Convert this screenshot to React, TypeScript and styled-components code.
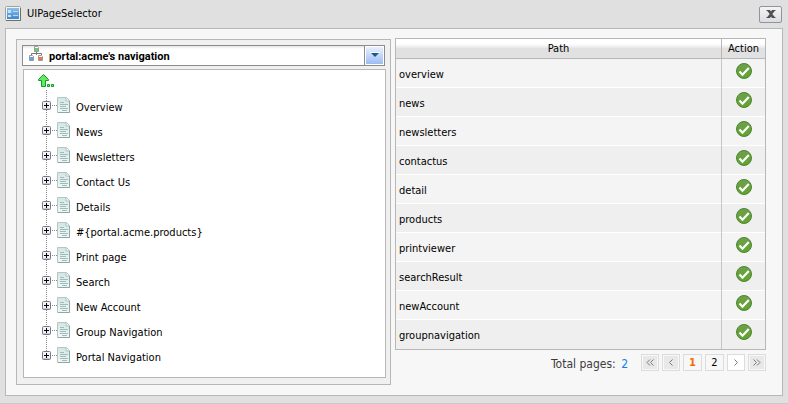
import React, { useState } from 'react';
import styled, { createGlobalStyle, css } from 'styled-components';

const GlobalStyle = createGlobalStyle`
  * { box-sizing: border-box; }
  body {
    margin: 0;
    background: #e0e0e0;
    color: #000;
    font: 11px/16px Tahoma, "DejaVu Sans Condensed", "Noto Sans", sans-serif;
  }
  button, select { font: inherit; color: inherit; }
  button { padding: 0; cursor: pointer; }
  svg { display: block; flex: none; }
`;

const Dialog = styled.section`
  padding: 0 5px 7px;
  border-bottom: 1px solid #cacaca;
`;

const TitleBar = styled.header`
  display: flex;
  align-items: center;
  gap: 6px;
  height: 28px;
`;

const Title = styled.h1`
  flex: 1;
  margin: 0;
  font-size: 11px;
  font-weight: normal;
`;

const CloseButton = styled.button`
  display: grid;
  place-items: center;
  width: 23px;
  height: 17px;
  margin-right: 1px;
  border: 1px solid #92949c;
  border-radius: 2px;
  background: linear-gradient(#f4f4f5, #dcdde1);
`;

const Content = styled.div`
  display: grid;
  grid-template-columns: 375fr 371fr;
  align-items: start;
  gap: 4px;
  padding: 9px 16px 10px 10px;
  border: 1px solid #b7b7b7;
  background: #f7f7f7;
`;

const Navigator = styled.div`
  margin-top: 1px;
  padding: 5px 4px 6px 5px;
  border: 1px solid #b7b7b7;
  background: #f0f0f0;
`;

const Combo = styled.div`
  position: relative;
  height: 21px;
  margin-right: 1px;
`;

const ComboSelect = styled.select`
  appearance: none;
  width: 100%;
  height: 21px;
  padding: 2px 24px 0 26px;
  border: 1px solid #8c8c8c;
  border-radius: 0;
  background: linear-gradient(#e4e4e4, #fff 3px);
  font-family: Tahoma, Roboto, sans-serif;
  font-weight: bold;
`;

const ComboIcon = styled.span`
  position: absolute;
  top: 1px;
  left: 7px;
  pointer-events: none;
`;

const ComboArrow = styled.span`
  position: absolute;
  top: 1px;
  right: 1px;
  display: grid;
  place-items: center;
  width: 19px;
  height: 19px;
  border: 1px solid #fff;
  background: linear-gradient(#eaf0fc, #9dbcf5);
  box-shadow: -1px 0 #8c8c8c;
  pointer-events: none;
`;

const Tree = styled.div`
  margin: 3px 0 0 1px;
  padding: 4px 14px 8px;
  border: 1px solid #b7b7b7;
  background: #fff;
`;

const UpButton = styled.button`
  display: block;
  border: 0;
  background: none;
`;

const Nodes = styled.ul`
  margin: 2px 0 0;
  padding: 4px 0 0;
  list-style: none;
  background: repeating-linear-gradient(#888 0 1px, transparent 1px 2px) 8px 0 / 1px calc(100% - 17px) no-repeat;
`;

const Node = styled.li`
  display: flex;
  align-items: center;
  height: 25px;
  padding-left: 4px;
`;

const Toggle = styled.button`
  border: 0;
  background: none;
  margin-bottom: 2px;
`;

const Connector = styled.span`
  width: 6px;
  height: 1px;
  margin: 0 0 2px;
  background: repeating-linear-gradient(90deg, transparent 0 1px, #888 1px 2px);
`;

const NodeLink = styled.a`
  display: flex;
  align-items: center;
  gap: 6px;
  color: inherit;
  text-decoration: none;
  svg { margin-bottom: 3px; }
  span { margin-top: 3px; }
`;

const Table = styled.table`
  width: 100%;
  border: 1px solid #b7b7b7;
  border-spacing: 0;
  table-layout: fixed;
`;

const ActionCol = styled.col`
  width: 44px;
`;

const HeadCell = styled.th<{ $divided?: boolean }>`
  height: 20px;
  padding: 1px 0 0;
  border-bottom: 1px solid #b7b7b7;
  ${p => p.$divided && css`border-left: 1px solid #b7b7b7;`}
  background: linear-gradient(#fff 25%, #f0f0f0 40%, #e1e1e1 50%, #e1e1e1);
  font-weight: normal;
  text-align: center;
`;

const Row = styled.tr`
  background: #f4f4f4;
  &:nth-child(even) { background: #efefef; }
  &:not(:last-child) > td { box-shadow: inset 0 -1px #fff; }
`;

const PathCell = styled.td`
  height: 29px;
  padding: 2px 3px 0;
`;

const ActionCell = styled.td`
  padding: 0 14px 6px;
  border-left: 1px solid #c6c6c6;
`;

const PickButton = styled.button`
  display: block;
  border: 0;
  background: none;
`;

const Pager = styled.nav`
  display: flex;
  justify-content: flex-end;
  align-items: flex-start;
  gap: 3px;
  margin-top: 4px;
`;

const Total = styled.span`
  margin: 2px 10px 0 0;
  color: #3c3c3c;
  font-size: 12px;
`;

const Count = styled.b`
  margin-left: 2px;
  color: #0a82f0;
  font-weight: normal;
`;

const PageButton = styled.button<{ $current?: boolean; $plain?: boolean }>`
  display: grid;
  place-items: center;
  width: 18px;
  height: 17px;
  border: 1px solid #dcdcdc;
  background: #fff;
  ${p => p.$plain && css`
    width: 19px;
    background: #f7f7f7;
  `}
  ${p => p.$current && css`color: #f36c00; font-weight: bold;`}
  &:disabled {
    background: #e8e8e8;
    box-shadow: inset 0 0 0 1px #f8f8f8;
    cursor: default;
  }
`;

const WindowIcon = () => (
  <svg width="16" height="16" aria-hidden="true">
    <defs>
      <linearGradient id="win" x2="0" y2="1">
        <stop stopColor="#8cc0ee" /><stop offset="1" stopColor="#3f86cb" />
      </linearGradient>
    </defs>
    <rect x=".5" y=".5" width="15" height="14" rx="1" fill="#f4f4ee" stroke="#a3a29c" />
    <path d="M1 14.500h14.500V2" fill="none" stroke="#6e6d68" />
    <rect x="2" y="2" width="12" height="11" fill="url(#win)" />
    <path d="M3 4h3v3H3zM3 9h3v2H3z" fill="#c6e2f8" />
    <path d="M8 5.500h5M8 9.500h5" stroke="#b5d8f5" />
  </svg>
);

const CloseIcon = () => (
  <svg width="10" height="8" viewBox="0 0 10 8" aria-hidden="true">
    <path d="M.5 0H4l1 1.500L6 0h3.500v1H8.700L6.300 4l2.400 3h.8v1H6L5 6.500 4 8H.5V7h.8l2.400-3L1.300 1H.5z" fill="#505050" />
  </svg>
);

const SitemapIcon = () => (
  <svg width="15" height="16" aria-hidden="true">
    <path d="M7.500 5v4M2.500 9V7.500h10V9" fill="none" stroke="#777" />
    <g fill="#fff" stroke="#999">
      <path d="M5.500 .5h3l1 1v4h-4z" />
      <path d="M.5 9.500h3l1 1v4h-4z" />
      <path d="M9.500 9.500h3l1 1v4h-4z" />
    </g>
    <path d="M6 2h3v3h-3z" fill="#6cc96c" />
    <path d="M1 11h3v3h-3z" fill="#5ba5ee" />
    <path d="M10 11h3v3h-3z" fill="#f2714c" />
  </svg>
);

const ArrowIcon = () => (
  <svg width="12" height="7" aria-hidden="true">
    <path d="M1 .5h10" stroke="#fff" />
    <path d="M2 1h8L6 5z" fill="#125b91" />
  </svg>
);

const UpIcon = () => (
  <svg width="17" height="14" aria-hidden="true">
    <path d="M5.500 .5L10.500 5.500V6.500H7.500V12.500H3.500V6.500H.5V5.500z" fill="#66e866" stroke="#119c22" />
    <path d="M9.500 10.500h2v2h-2zM13.500 10.500h2v2h-2z" fill="#7bea7b" stroke="#119c22" />
  </svg>
);

const PlusIcon = () => (
  <svg width="9" height="9" aria-hidden="true">
    <rect x=".5" y=".5" width="8" height="8" rx="1" fill="#f2f2f6" stroke="#777785" />
    <path d="M1 7.500h7" stroke="#c6c6d4" />
    <path d="M2 4.500h5M4.500 2v5" stroke="#000" />
  </svg>
);

const PageIcon = () => (
  <svg width="13" height="16" aria-hidden="true">
    <defs>
      <linearGradient id="sheet" x2="0" y2="1">
        <stop stopColor="#d2e6e4" /><stop offset="1" stopColor="#f1f8f7" />
      </linearGradient>
    </defs>
    <path d="M.5 .5h9l3 3v12H.5z" fill="url(#sheet)" stroke="#b3c8c6" />
    <path d="M1 15.500h11.500V4" fill="none" stroke="#8ca8a6" />
    <path d="M9 1V4h3" fill="#fff" stroke="#a9c3c1" />
    <path d="M3 5.500h4M3 7.500h8M3 9.500h6M3 11.500h8M5 13.500h5" stroke="#9fbab8" />
  </svg>
);

const CheckIcon = () => (
  <svg width="16" height="16" aria-hidden="true">
    <defs>
      <linearGradient id="ok" x2="0" y2="1">
        <stop stopColor="#6f9f4c" /><stop offset="1" stopColor="#5fa62c" />
      </linearGradient>
    </defs>
    <circle cx="8" cy="8" r="7.500" fill="url(#ok)" stroke="#4f8433" />
    <path d="M3.500 8.500l3 3.200L12.800 5" fill="none" stroke="#fff" strokeWidth="2.200" />
  </svg>
);

const Chevron = ({ d }: { d: string }) => (
  <svg width="8" height="7" aria-hidden="true">
    <path d={d} fill="none" stroke="#777" />
  </svg>
);

const nodes = [
  'Overview', 'News', 'Newsletters', 'Contact Us', 'Details', '#{portal.acme.products}',
  'Print page', 'Search', 'New Account', 'Group Navigation', 'Portal Navigation',
];

const paths = [
  'overview', 'news', 'newsletters', 'contactus', 'detail',
  'products', 'printviewer', 'searchResult', 'newAccount', 'groupnavigation',
];

export default function App() {
  const [page, setPage] = useState(1);
  const first = page === 1;
  return (
    <>
      <GlobalStyle />
      <Dialog role="dialog" aria-labelledby="dialog-title">
        <TitleBar>
          <WindowIcon />
          <Title id="dialog-title">UIPageSelector</Title>
          <CloseButton aria-label="Close"><CloseIcon /></CloseButton>
        </TitleBar>
        <Content>
          <Navigator>
            <Combo>
              <ComboSelect aria-label="Navigation">
                <option>portal:acme's navigation</option>
              </ComboSelect>
              <ComboIcon><SitemapIcon /></ComboIcon>
              <ComboArrow><ArrowIcon /></ComboArrow>
            </Combo>
            <Tree>
              <UpButton aria-label="Up one level"><UpIcon /></UpButton>
              <Nodes>
                {nodes.map(name => (
                  <Node key={name}>
                    <Toggle aria-label={`Expand ${name}`}><PlusIcon /></Toggle>
                    <Connector />
                    <NodeLink href="#"><PageIcon /><span>{name}</span></NodeLink>
                  </Node>
                ))}
              </Nodes>
            </Tree>
          </Navigator>
          <div>
            <Table>
              <colgroup><col /><ActionCol /></colgroup>
              <thead>
                <tr>
                  <HeadCell scope="col">Path</HeadCell>
                  <HeadCell scope="col" $divided>Action</HeadCell>
                </tr>
              </thead>
              <tbody>
                {paths.map(path => (
                  <Row key={path}>
                    <PathCell>{path}</PathCell>
                    <ActionCell>
                      <PickButton aria-label={`Select ${path}`}><CheckIcon /></PickButton>
                    </ActionCell>
                  </Row>
                ))}
              </tbody>
            </Table>
            <Pager aria-label="Pages">
              <Total>Total pages: <Count>2</Count></Total>
              <PageButton disabled aria-label="First page"><Chevron d="M4 .5L1 3.500l3 3M7.500 .5l-3 3 3 3" /></PageButton>
              <PageButton disabled={first} onClick={() => setPage(1)} aria-label="Previous page"><Chevron d="M5.500 .5l-3 3 3 3" /></PageButton>
              <PageButton $plain $current={first} onClick={() => setPage(1)}>1</PageButton>
              <PageButton $plain $current={!first} onClick={() => setPage(2)}>2</PageButton>
              <PageButton disabled={!first} onClick={() => setPage(2)} aria-label="Next page"><Chevron d="M2.500 .5l3 3-3 3" /></PageButton>
              <PageButton disabled aria-label="Last page"><Chevron d="M.5 .5l3 3-3 3M4 .5l3 3-3 3" /></PageButton>
            </Pager>
          </div>
        </Content>
      </Dialog>
    </>
  );
}
